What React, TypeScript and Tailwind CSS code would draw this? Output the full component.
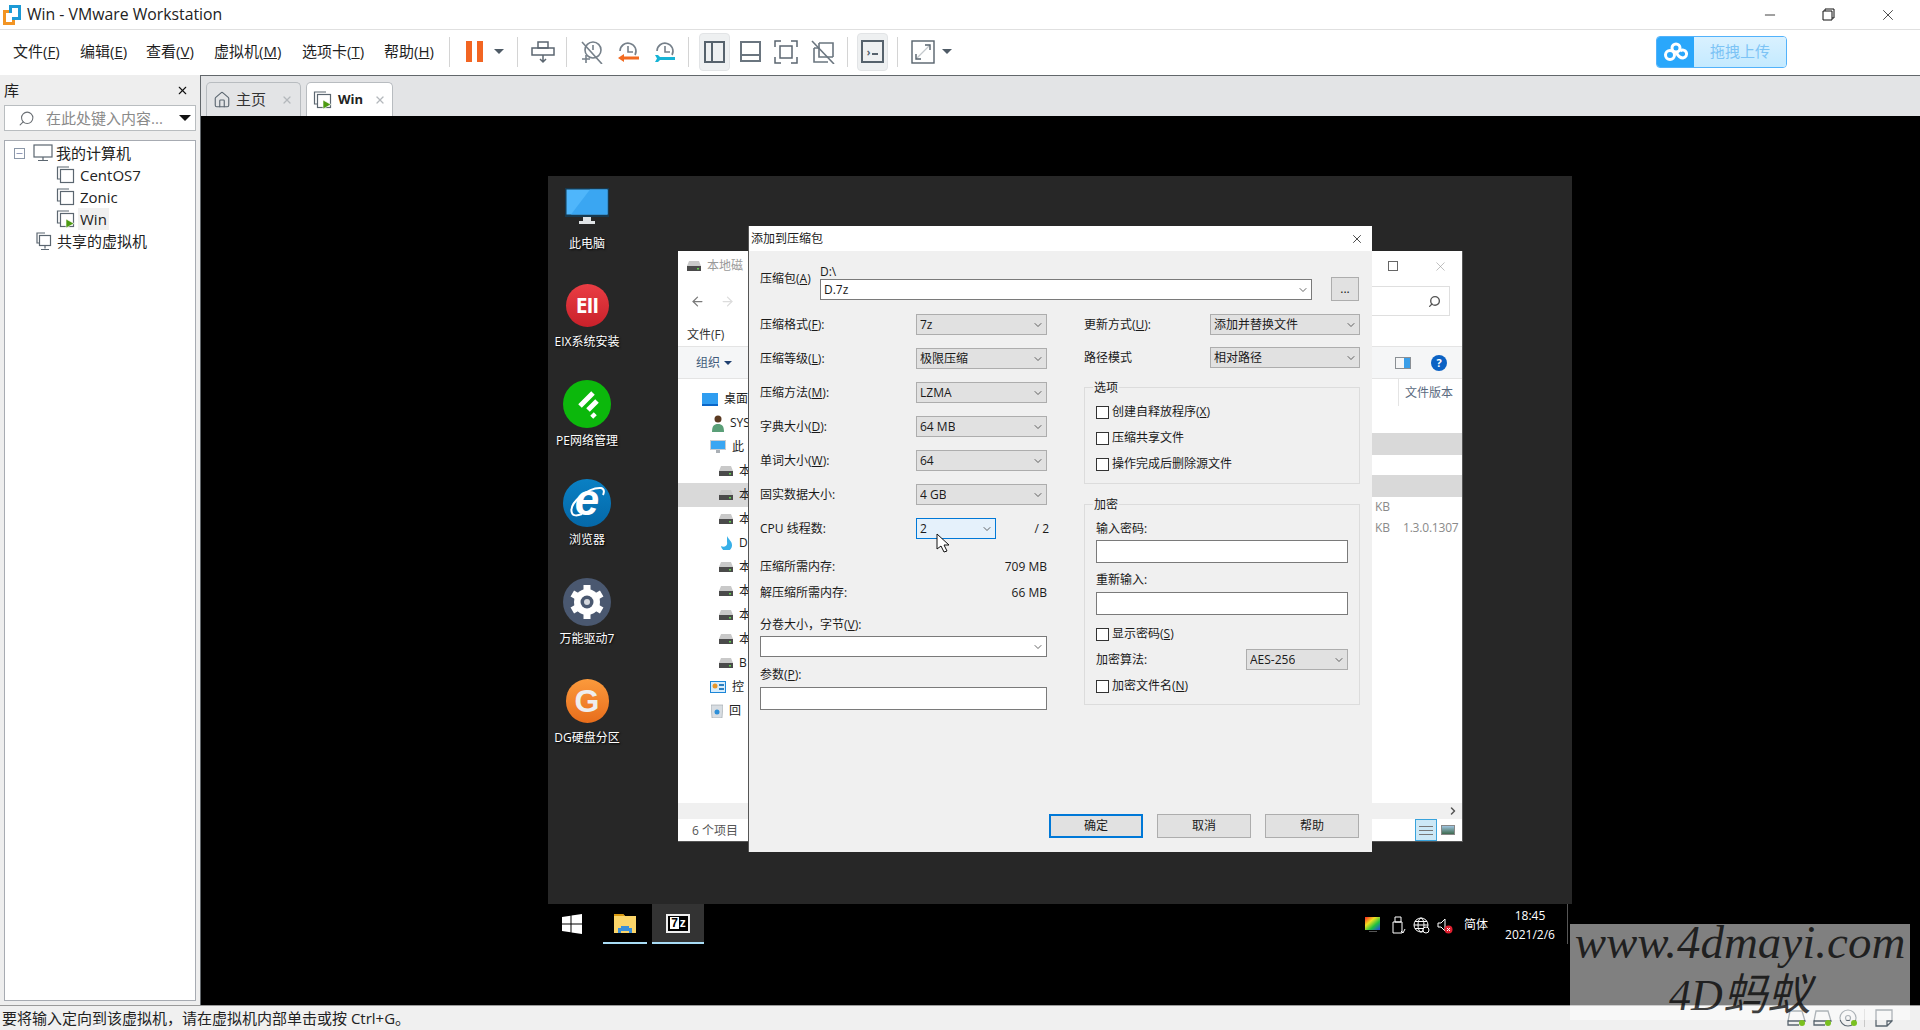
import React from 'react';
import { X, Minus, ChevronDown, ChevronRight, ArrowLeft, ArrowRight, Search, Home } from 'lucide-react';

const FONT = "font-['Open_Sans','Noto_Sans_CJK_SC',sans-serif]";

const menus = [
  { label: '文件', key: 'F', w: 'w-[67px]' },
  { label: '编辑', key: 'E', w: 'w-[66px]' },
  { label: '查看', key: 'V', w: 'w-[68px]' },
  { label: '虚拟机', key: 'M', w: 'w-[88px]' },
  { label: '选项卡', key: 'T', w: 'w-[82px]' },
  { label: '帮助', key: 'H', w: 'w-[65px]' },
];

function VmIcon({ run = false }: { run?: boolean }) {
  return (
    <svg width="20" height="20" viewBox="0 0 20 20" fill="none" stroke="#5b6670" strokeWidth="1.2" className="shrink-0">
      <path d="M13 2H1.5v12H4" />
      <rect x="4.5" y="4.5" width="13" height="13" />
      {run && <path d="M10 10l8 4.5-8 4.5z" fill="#4d9a12" stroke="#fff" strokeWidth="0.6" />}
    </svg>
  );
}

function Caret() {
  return <div className="w-0 h-0 border-x-[5px] border-x-transparent border-t-[5px] border-t-[#4f5b66]" />;
}

function Sep() {
  return <div className="w-px h-[30px] bg-[#d4d4d4]" />;
}

function SnapshotIcon({ color, wrench = false }: { color: string; wrench?: boolean }) {
  return (
    <svg width="24" height="24" viewBox="0 0 24 24" fill="none" className="shrink-0">
      <path d="M4 11a8 8 0 1 1 15 4" stroke="#76808a" strokeWidth="1.6" />
      <path d="M12 6v6h5" stroke="#76808a" strokeWidth="1.6" />
      {wrench ? (
        <path d="M2 15h3l2 2h15v3H7l-2 2H2l2-3.500z" fill={color} />
      ) : (
        <path d="M2 18l6-4v2.500h15v3H8V22z" fill={color} />
      )}
    </svg>
  );
}

function Toolbar() {
  return (
    <div className="flex items-center h-[45px] pb-[2px] bg-white shrink-0">
      <div className="flex items-center pl-[13px] text-[15px] text-[#1f1f1f]">
        {menus.map((m) => (
          <span key={m.key} className={m.w}>
            {m.label}(<u>{m.key}</u>)
          </span>
        ))}
      </div>
      <Sep />
      <div className="flex gap-[5px] ml-[16px]">
        <div className="w-[6px] h-[21px] bg-[#f26522]" />
        <div className="w-[6px] h-[21px] bg-[#f26522]" />
      </div>
      <div className="ml-[11px]"><Caret /></div>
      <div className="ml-[13px]"><Sep /></div>
      <svg width="24" height="24" viewBox="0 0 24 24" fill="none" stroke="#5b6670" strokeWidth="1.5" className="ml-[13px]">
        <rect x="7" y="2" width="10" height="6" />
        <rect x="1" y="8" width="22" height="7" />
        <path d="M12 15v6M9 19l3 3 3-3" />
      </svg>
      <div className="ml-[11px]"><Sep /></div>
      <div className="relative ml-[13px] w-6 h-6">
        <svg width="24" height="24" viewBox="0 0 24 24" fill="none" stroke="#76808a" strokeWidth="1.6">
          <circle cx="13" cy="10" r="8" />
          <path d="M13 5v5M2 2l20 22M2 19h8M6 15v8" />
        </svg>
      </div>
      <div className="ml-[12px]"><SnapshotIcon color="#f26a21" /></div>
      <div className="ml-[13px]"><SnapshotIcon color="#17b4d6" wrench /></div>
      <div className="ml-[11px]"><Sep /></div>
      <div className="ml-[10px] w-[31px] h-[38px] bg-[#eef0f1] border border-[#e2e4e6] rounded-[4px] flex items-center justify-center">
        <div className="w-[21px] h-[22px] border-2 border-[#56626c] flex">
          <div className="w-[7px] border-r-2 border-[#56626c]" />
        </div>
      </div>
      <div className="ml-[10px] w-[21px] h-[21px] border-2 border-[#6a757f] flex flex-col justify-end">
        <div className="h-[6px] border-t-2 border-[#6a757f]" />
      </div>
      <svg width="24" height="24" viewBox="0 0 24 24" fill="none" stroke="#5b6670" strokeWidth="1.5" className="ml-[13px]">
        <path d="M1 7V1h6M17 1h6v6M23 17v6h-6M7 23H1v-6" />
        <rect x="6" y="6" width="12" height="12" />
      </svg>
      <svg width="24" height="24" viewBox="0 0 24 24" fill="none" stroke="#6a757f" strokeWidth="1.6" className="ml-[13px]">
        <path d="M3 8v14h14M8 3h14v14M8 3v14h14M3 8h5" />
        <path d="M1 1l22 23" />
      </svg>
      <div className="ml-[12px]"><Sep /></div>
      <div className="ml-[9px] w-[31px] h-[38px] bg-[#eef0f1] border border-[#e2e4e6] rounded-[4px] flex items-center justify-center">
        <div className="w-[23px] h-[23px] border-2 border-[#56626c] flex items-center justify-center gap-[2px]">
          <span className="text-[10px] font-bold leading-none text-[#56626c]">›</span>
          <div className="w-[6px] h-[2px] mt-[4px] bg-[#56626c]" />
        </div>
      </div>
      <div className="ml-[9px]"><Sep /></div>
      <svg width="24" height="24" viewBox="0 0 24 24" fill="none" className="ml-[13px]">
        <rect x="1" y="1" width="22" height="22" stroke="#56626c" strokeWidth="1.4" />
        <path d="M6 18L18 6" stroke="#c3c8cc" strokeWidth="1.2" />
        <path d="M14 5h5v5M5 14v5h5" stroke="#56626c" strokeWidth="1.4" />
      </svg>
      <div className="ml-[7px]"><Caret /></div>
      <div className="ml-auto mr-[133px] flex w-[131px] h-[32px] rounded-[4px] border border-[#52b2fb] overflow-hidden">
        <div className="w-[37px] bg-[#2aa7fb] flex items-center justify-center">
          <svg width="26" height="20" viewBox="0 0 26 20" fill="none" stroke="#fff" strokeWidth="3">
            <circle cx="13" cy="6" r="4" />
            <circle cx="7" cy="13" r="4.500" />
            <path d="M13 10c2 4 4 6 7 6a4 4 0 1 0-3-7" />
          </svg>
        </div>
        <div className="flex-1 bg-gradient-to-b from-[#d9f1ff] to-[#c4eaff] flex items-center justify-center text-[15px] text-[#7cc3f5]">
          拖拽上传
        </div>
      </div>
    </div>
  );
}

function Library() {
  return (
    <div className="w-[196px] shrink-0 flex flex-col pl-1 pb-1">
      <div className="h-[30px] flex items-center justify-between text-[15px] text-[#222]">
        <span>库</span>
        <X size={13} strokeWidth={2} color="#111" className="mr-[7px]" />
      </div>
      <div className="h-[26px] bg-white border border-[#b9bdc0] flex items-center pl-[13px] pr-[4px]">
        <Search size={17} color="#6a6f74" strokeWidth={1.5} className="-scale-x-100" />
        <span className="ml-[11px] text-[15px] text-[#8a8a8a] whitespace-nowrap">在此处键入内容...</span>
        <div className="ml-auto w-0 h-0 border-x-[6px] border-x-transparent border-t-[6px] border-t-[#111]" />
      </div>
      <div className="mt-[9px] flex-1 bg-white border border-[#a7abb2] pt-[1px] text-[15px] text-[#222]">
        <div className="h-[22px] flex items-center pl-[9px]">
          <div className="w-[11px] h-[11px] border border-[#8b97a8] flex items-center justify-center">
            <Minus size={9} color="#394a80" strokeWidth={1.5} />
          </div>
          <svg width="20" height="18" viewBox="0 0 20 18" fill="none" stroke="#5b6670" strokeWidth="1.2" className="ml-[8px]">
            <rect x="1" y="1" width="18" height="12" />
            <path d="M10 13v3M5 16.500h10" />
          </svg>
          <span className="ml-[3px]">我的计算机</span>
        </div>
        {['CentOS7', 'Zonic', 'Win'].map((n) => (
          <div key={n} className="h-[22px] flex items-center pl-[51px]">
            <VmIcon run={n === 'Win'} />
            <span className={n === 'Win' ? 'ml-[2px] px-[2px] bg-[#f0f0f0] leading-[22px]' : 'ml-[4px]'}>{n}</span>
          </div>
        ))}
        <div className="h-[22px] flex items-center pl-[31px]">
          <svg width="16" height="19" viewBox="0 0 16 19" fill="none" stroke="#5b6670" strokeWidth="1.2">
            <path d="M9 1H1v10h2" />
            <rect x="3.500" y="3.500" width="11" height="10" />
            <path d="M9 13.500v3M5 17.500h8" />
          </svg>
          <span className="ml-[5px]">共享的虚拟机</span>
        </div>
      </div>
    </div>
  );
}

function Tabs() {
  return (
    <div className="h-[41px] bg-[#e3e4e6] border-t border-l border-[#62676b] flex items-end pl-[5px] gap-[5px] shrink-0">
      <div className="w-[95px] h-[34px] border border-b-0 border-[#b8bcc0] rounded-t-[5px] flex items-center pl-[6px] text-[15px] text-[#333]">
        <Home size={18} color="#5b6670" strokeWidth={1.5} />
        <span className="ml-[5px]">主页</span>
        <X size={12} color="#b4b8bc" strokeWidth={2.5} className="ml-[15px]" />
      </div>
      <div className="w-[87px] h-[34px] bg-white border border-b-0 border-[#b8bcc0] rounded-t-[5px] flex items-center pl-[6px] text-[13px] font-bold text-[#222]">
        <VmIcon run />
        <span className="ml-[5px]">Win</span>
        <X size={12} color="#b4b8bc" strokeWidth={2.5} className="ml-[11px]" />
      </div>
    </div>
  );
}

function DesktopItem({ label, children, h }: { label: string; children: React.ReactNode; h: string }) {
  return (
    <div className={`${h} flex flex-col items-center`}>
      <div className="h-[48px] flex items-center justify-center">{children}</div>
      <span className="mt-[3px] text-[12px] leading-[20px] text-white [text-shadow:1px_1px_2px_#000] whitespace-nowrap">{label}</span>
    </div>
  );
}

function DesktopIcons() {
  return (
    <div className="absolute left-0 top-[7px] w-[78px] flex flex-col">
      <DesktopItem label="此电脑" h="h-[98px]">
        <svg width="44" height="38" viewBox="0 0 44 38">
          <rect width="44" height="29" fill="#17394f" />
          <rect x="1.500" y="1.500" width="41" height="25" fill="#4fb6fb" />
          <path d="M25 1.500h17.500v25H6z" fill="#3aa6f2" />
          <path d="M18 29h8v4h4v3H14v-3h4z" fill="#dfe3e6" />
        </svg>
      </DesktopItem>
      <DesktopItem label="EIX系统安装" h="h-[99px]">
        <div className="w-[43px] h-[43px] rounded-full bg-gradient-to-b from-[#ea3d44] to-[#c9202a] flex items-center justify-center text-white text-[21px] font-bold leading-none tracking-[-1px]">
          EII
        </div>
      </DesktopItem>
      <DesktopItem label="PE网络管理" h="h-[99px]">
        <svg width="48" height="48" viewBox="0 0 48 48">
          <circle cx="24" cy="24" r="24" fill="#0cb80c" />
          <path d="M17 26l13-13M25 30l9-9M29 34l3 3" stroke="#fff" strokeWidth="5" fill="none" />
        </svg>
      </DesktopItem>
      <DesktopItem label="浏览器" h="h-[99px]">
        <div className="relative w-[48px] h-[48px] rounded-full bg-gradient-to-b from-[#0a80c4] to-[#0568a8] flex items-center justify-center">
          <span className="text-white text-[44px] font-bold italic leading-none font-['Liberation_Sans',sans-serif] -mt-[7px]">e</span>
          <svg width="48" height="48" viewBox="0 0 48 48" fill="none" className="absolute inset-0">
            <path d="M9 34C5 24 26 8 38 9c4 1 3 5 2 7M9 34c1 3 5 3 10 1" stroke="#fff" strokeWidth="2" />
          </svg>
        </div>
      </DesktopItem>
      <DesktopItem label="万能驱动7" h="h-[99px]">
        <svg width="48" height="48" viewBox="0 0 48 48">
          <circle cx="24" cy="24" r="24" fill="#4a5870" />
          <path d="M24 7V41M9.300 15.500L38.700 32.500M9.300 32.500L38.700 15.500" stroke="#fff" strokeWidth="7" />
          <circle cx="24" cy="24" r="13" fill="#fff" />
          <circle cx="24" cy="24" r="6.500" fill="#4a5870" />
          <circle cx="24" cy="24" r="3" fill="#d5d8de" />
        </svg>
      </DesktopItem>
      <DesktopItem label="DG硬盘分区" h="h-[99px]">
        <div className="w-[43px] h-[44px] rounded-full bg-gradient-to-b from-[#fb9a3c] to-[#e86d1a] flex items-center justify-center text-[#eeeeee] text-[32px] font-bold leading-none font-['Liberation_Sans',sans-serif]">
          G
        </div>
      </DesktopItem>
    </div>
  );
}

function Drive() {
  return (
    <svg width="14" height="10" viewBox="0 0 14 10" className="shrink-0">
      <path d="M2 0h10l2 5H0z" fill="#c9c9c9" />
      <rect y="5" width="14" height="5" fill="#4a4a4a" />
      <rect x="10" y="7" width="2" height="1.500" fill="#5fd04c" />
    </svg>
  );
}

// only the part of each name that shows beside the dialog
const treeRows: { text: string; kind: string; pl: string; active?: boolean }[] = [
  { text: '桌面', kind: 'desk', pl: 'pl-[24px]' },
  { text: 'SYS', kind: 'user', pl: 'pl-[34px]' },
  { text: '此', kind: 'pc', pl: 'pl-[32px]' },
  { text: '本', kind: 'drive', pl: 'pl-[41px]' },
  { text: '本', kind: 'drive', pl: 'pl-[41px]', active: true },
  { text: '本', kind: 'drive', pl: 'pl-[41px]' },
  { text: 'D', kind: 'dvd', pl: 'pl-[41px]' },
  { text: '本', kind: 'drive', pl: 'pl-[41px]' },
  { text: '本', kind: 'drive', pl: 'pl-[41px]' },
  { text: '本', kind: 'drive', pl: 'pl-[41px]' },
  { text: '本', kind: 'drive', pl: 'pl-[41px]' },
  { text: 'B', kind: 'drive', pl: 'pl-[41px]' },
  { text: '控', kind: 'panel', pl: 'pl-[32px]' },
  { text: '回', kind: 'bin', pl: 'pl-[33px]' },
];

function TreeGlyph({ kind }: { kind: string }) {
  if (kind === 'drive') return <Drive />;
  if (kind === 'desk') return <div className="w-4 h-[13px] bg-[#2f9df0] border-b-2 border-[#0a66c8] shrink-0" />;
  if (kind === 'user')
    return (
      <svg width="12" height="17" viewBox="0 0 12 17" className="shrink-0">
        <circle cx="6" cy="4" r="3.500" fill="#5b3a22" />
        <path d="M0 17c0-6 2-8 6-8s6 2 6 8z" fill="#5a9f78" />
      </svg>
    );
  if (kind === 'pc')
    return (
      <svg width="16" height="14" viewBox="0 0 16 14" className="shrink-0">
        <rect width="16" height="10" fill="#c8ccd0" />
        <rect x="1" y="1" width="14" height="8" fill="#3aa6f2" />
        <rect x="6" y="10" width="4" height="3" fill="#aab0b6" />
      </svg>
    );
  if (kind === 'dvd')
    return (
      <svg width="14" height="14" viewBox="0 0 14 14" className="shrink-0">
        <path d="M8 0c1 3 5 5 5 9a5.500 5.500 0 0 1-11 1c3 2 7 0 6-4z" fill="#38b0e8" />
      </svg>
    );
  if (kind === 'panel')
    return (
      <svg width="16" height="12" viewBox="0 0 16 12" className="shrink-0">
        <rect width="16" height="12" fill="#1c86d8" />
        <rect x="1" y="1" width="14" height="10" fill="#d7ecfb" />
        <circle cx="5" cy="5" r="2.500" fill="#e8962a" />
        <rect x="9" y="3" width="5" height="2" fill="#2d7fc0" />
        <rect x="9" y="7" width="5" height="2" fill="#2d7fc0" />
      </svg>
    );
  return (
    <svg width="12" height="14" viewBox="0 0 12 14" className="shrink-0">
      <path d="M0 1h12l-1 13H1z" fill="#d8dde2" stroke="#9aa2a8" strokeWidth="0.6" />
      <circle cx="6" cy="8" r="2.500" fill="#2d8fd8" />
    </svg>
  );
}

function Explorer() {
  return (
    <div className="absolute left-[130px] top-[75px] w-[785px] h-[591px] bg-white border-r border-b border-[#555] flex flex-col text-[12px] text-[#333]">
      <div className="h-[30px] flex items-center shrink-0 pl-[9px]">
        <Drive />
        <span className="ml-[6px] text-[#9a9a9a]">本地磁</span>
        <div className="ml-auto w-[10px] h-[10px] border border-[#666]" />
        <X size={15} color="#9a9a9a" strokeWidth={1} className="ml-[35px] mr-[14px]" />
      </div>
      <div className="h-[40px] flex items-center shrink-0 pl-[12px]">
        <ArrowLeft size={15} color="#7a7a7a" strokeWidth={2} />
        <ArrowRight size={15} color="#dcdcdc" strokeWidth={2} className="ml-[15px]" />
        <div className="ml-auto mr-[12px] w-[200px] h-[30px] border border-[#dfdfdf] flex items-center justify-end pr-[8px]">
          <Search size={13} color="#555" strokeWidth={2.5} className="-scale-x-100" />
        </div>
      </div>
      <div className="h-[25px] flex items-center shrink-0 pl-[9px] pt-[3px] text-[#333]">
        <span>文件(F)</span>
      </div>
      <div className="h-[33px] bg-[#f5f6f7] border-y border-[#e4e4e4] flex items-center shrink-0 pl-[18px] text-[#3f5a7a]">
        <span>组织</span>
        <div className="ml-[4px] w-0 h-0 border-x-[4px] border-x-transparent border-t-[4px] border-t-[#1f3f6f]" />
        <div className="ml-auto w-[16px] h-[12px] border border-[#8a8f94] flex justify-end">
          <div className="w-[6px] bg-[#3a9ee8]" />
        </div>
        <div className="ml-[20px] mr-[15px] w-[16px] h-[16px] rounded-full bg-[#0b62c4] flex items-center justify-center text-white text-[11px] font-bold leading-none">?</div>
      </div>
      <div className="flex-1 flex min-h-0">
        <div className="w-[70px] pt-2 overflow-hidden shrink-0">
          {treeRows.map((r, i) => (
            <div key={i} className={`h-6 flex items-center whitespace-nowrap ${r.pl} ${r.active ? 'bg-[#d9d9d9]' : ''}`}>
              <TreeGlyph kind={r.kind} />
              <span className="ml-[6px] text-[#222]">{r.text}</span>
            </div>
          ))}
        </div>
        <div className="flex-1 flex flex-col">
          <div className="h-[27px] pl-[650px] shrink-0">
            <div className="h-full border-l border-[#e4e4e4] pl-[6px] leading-[27px] text-[#5a6a80]">文件版本</div>
          </div>
          <div className="mt-[6px] h-[21px]" />
          <div className="h-[22px] bg-[#d9d9d9]" />
          <div className="h-[20px]" />
          <div className="h-[22px] bg-[#d9d9d9]" />
          <div className="h-[21px] pl-[627px] leading-[20px] text-[#8a8a8a]">KB</div>
          <div className="h-[21px] pl-[627px] flex leading-[20px] text-[#8a8a8a] whitespace-nowrap">
            <span className="w-[28px] shrink-0">KB</span>
            <span className="tracking-[-0.2px]">1.3.0.1307</span>
          </div>
        </div>
      </div>
      <div className="h-[16px] bg-[#f0f0f0] shrink-0 flex items-center justify-end pr-[3px]">
        <ChevronRight size={12} color="#555" strokeWidth={3} />
      </div>
      <div className="h-[22px] shrink-0 flex items-center pl-[14px] text-[#555]">
        <span className="pt-[2px]">6 个项目</span>
        <div className="ml-auto w-[22px] h-[22px] bg-[#cce8f6] border border-[#39a3dc] flex flex-col justify-center gap-[3px] px-[3px]">
          <div className="h-px bg-[#777]" />
          <div className="h-px bg-[#777]" />
          <div className="h-px bg-[#777]" />
        </div>
        <div className="ml-[4px] mr-[7px] w-[14px] h-[10px] border border-[#888] bg-gradient-to-b from-[#9fc4e0] to-[#3f6a4f]" />
      </div>
    </div>
  );
}

function Label({ text, k, suffix = ':' }: { text: string; k?: string; suffix?: string }) {
  return (
    <span className="whitespace-nowrap">
      {text}
      {k && (
        <>
          (<u>{k}</u>)
        </>
      )}
      {suffix}
    </span>
  );
}

function Select({ value, w, focus = false, white = false }: { value: string; w: string; focus?: boolean; white?: boolean }) {
  const tone = focus
    ? 'bg-[#e5f1fb] border-[#0078d7]'
    : white
      ? 'bg-white border-[#7a7a7a]'
      : 'bg-[#e1e1e1] border-[#adadad]';
  return (
    <div className={`${w} h-[21px] shrink-0 border ${tone} flex items-center justify-between pl-[3px] pr-[2px]`}>
      <span className="truncate">{value}</span>
      <ChevronDown size={12} color="#333" strokeWidth={1.5} />
    </div>
  );
}

const formRows = [
  { text: '压缩格式', k: 'F', value: '7z' },
  { text: '压缩等级', k: 'L', value: '极限压缩' },
  { text: '压缩方法', k: 'M', value: 'LZMA' },
  { text: '字典大小', k: 'D', value: '64 MB' },
  { text: '单词大小', k: 'W', value: '64' },
  { text: '固实数据大小', value: '4 GB' },
];

function Check({ label, k }: { label: string; k?: string }) {
  return (
    <div className="flex items-center h-[14px]">
      <div className="w-[13px] h-[13px] bg-white border border-[#333]" />
      <span className="ml-[3px]">
        <Label text={label} k={k} suffix="" />
      </span>
    </div>
  );
}

function Group({ title, className, children }: { title: string; className: string; children: React.ReactNode }) {
  return (
    <div className={`relative border border-[#dcdcdc] px-[11px] ${className}`}>
      <span className="absolute -top-[8px] left-[8px] px-[1px] bg-[#f0f0f0] leading-[16px]">{title}</span>
      {children}
    </div>
  );
}

function Btn({ label, primary = false }: { label: string; primary?: boolean }) {
  return (
    <div className={`w-[94px] h-[24px] bg-[#e1e1e1] flex items-center justify-center ${primary ? 'border-2 border-[#0078d7]' : 'border border-[#adadad]'}`}>
      {label}
    </div>
  );
}

function Dialog() {
  return (
    <div className="absolute left-[200px] top-[50px] w-[624px] h-[626px] bg-[#f0f0f0] border-l border-[#555] flex flex-col text-[12px] text-[#1a1a1a]">
      <div className="h-[25px] bg-white flex items-center justify-between shrink-0 pl-[2px] pr-[8px]">
        <span>添加到压缩包</span>
        <X size={14} color="#111" strokeWidth={1.3} />
      </div>
      <div className="h-[51px] shrink-0 flex pl-[11px] pt-[17px]">
        <div className="w-[60px] pt-[1px] leading-[20px]"><Label text="压缩包" k="A" suffix="" /></div>
        <div className="-mt-[4px]">
          <div className="h-[15px] leading-[15px]">D:\</div>
          <div className="w-[492px] h-[21px] bg-white border border-[#7a7a7a] flex items-center justify-between pl-[3px] pr-[2px]">
            <span>D.7z</span>
            <ChevronDown size={12} color="#333" strokeWidth={1.5} />
          </div>
        </div>
        <div className="ml-[19px] mt-[9px] w-[28px] h-[24px] bg-[#e1e1e1] border border-[#adadad] flex items-center justify-center">...</div>
      </div>
      <div className="h-[12px] shrink-0" />
      <div className="flex-1 flex pl-[11px] min-h-0">
        <div className="w-[287px] flex flex-col shrink-0">
          {formRows.map((r) => (
            <div key={r.text} className="h-[34px] shrink-0 flex justify-between">
              <div className="h-[21px] flex items-center"><Label text={r.text} k={r.k} /></div>
              <Select value={r.value} w="w-[131px]" />
            </div>
          ))}
          <div className="h-[34px] shrink-0 flex">
            <div className="w-[156px] h-[21px] flex items-center">CPU 线程数:</div>
            <Select value="2" w="w-[80px]" focus />
            <div className="ml-auto -mr-[2px] h-[21px] flex items-center">/ 2</div>
          </div>
          <div className="mt-[2px] h-[26px] flex items-center justify-between">
            <Label text="压缩所需内存" /><span>709 MB</span>
          </div>
          <div className="h-[26px] flex items-center justify-between">
            <Label text="解压缩所需内存" /><span>66 MB</span>
          </div>
          <div className="mt-[8px] h-[22px] flex items-center"><Label text="分卷大小，字节" k="V" /></div>
          <Select value="" w="w-full" white />
          <div className="mt-[6px] h-[23px] flex items-center"><Label text="参数" k="P" /></div>
          <div className="h-[23px] mt-[1px] bg-white border border-[#7a7a7a]" />
        </div>
        <div className="ml-[37px] w-[276px] flex flex-col">
          <div className="h-[33px] flex justify-between shrink-0">
            <div className="h-[21px] flex items-center"><Label text="更新方式" k="U" /></div>
            <Select value="添加并替换文件" w="w-[150px]" />
          </div>
          <div className="h-[40px] flex justify-between shrink-0">
            <div className="h-[21px] flex items-center">路径模式</div>
            <Select value="相对路径" w="w-[150px]" />
          </div>
          <Group title="选项" className="h-[97px] pt-[17px] flex flex-col gap-[12px]">
            <Check label="创建自释放程序" k="X" />
            <Check label="压缩共享文件" />
            <Check label="操作完成后删除源文件" />
          </Group>
          <Group title="加密" className="mt-[20px] h-[201px] pt-[13px] flex flex-col">
            <div className="h-[22px] flex items-center"><Label text="输入密码" /></div>
            <div className="w-[252px] h-[23px] bg-white border border-[#7a7a7a]" />
            <div className="h-[29px] pt-[4px] flex items-center"><Label text="重新输入" /></div>
            <div className="w-[252px] h-[23px] bg-white border border-[#7a7a7a]" />
            <div className="mt-[12px]"><Check label="显示密码" k="S" /></div>
            <div className="mt-[8px] flex justify-between w-[252px]">
              <div className="h-[21px] flex items-center"><Label text="加密算法" /></div>
              <Select value="AES-256" w="w-[102px]" />
            </div>
            <div className="mt-[9px]"><Check label="加密文件名" k="N" /></div>
          </Group>
        </div>
      </div>
      <div className="flex justify-end gap-[14px] pr-[13px] pb-[14px] shrink-0">
        <Btn label="确定" primary />
        <Btn label="取消" />
        <Btn label="帮助" />
      </div>
    </div>
  );
}

function Taskbar() {
  return (
    <div className="h-[41px] flex bg-black text-white relative">
      <svg width="20" height="20" viewBox="0 0 20 20" className="ml-[14px] mt-[10px]" fill="#fff">
        <path d="M0 3l8.500-1.200v7.700H0zM9.500 1.600L20 0v9.500H9.500zM0 10.500h8.500v7.700L0 17zM9.500 10.500H20V20L9.500 18.400z" />
      </svg>
      <div className="ml-[21px] w-[44px] h-[40px] border-b-2 border-[#a8dcf5] flex items-center justify-center">
        <svg width="22" height="19" viewBox="0 0 22 19">
          <path d="M0 0h9l2 2h11v17H0z" fill="#fbd569" />
          <path d="M0 0h9l2 2H0z" fill="#d99a10" />
          <path d="M4 14h14v5h-3v-2H7v2H4z" fill="#3a8fd8" />
          <path d="M7 12h8v2H7z" fill="#3a8fd8" />
        </svg>
      </div>
      <div className="ml-[5px] w-[52px] h-[40px] bg-[#333] border-b-2 border-[#a8dcf5] flex items-center justify-center">
        <div className="w-[24px] h-[19px] bg-black border-2 border-[#eee] flex items-center justify-center gap-[1px] text-white font-bold text-[12px] leading-none font-['Liberation_Sans',sans-serif]">
          <span className="bg-white text-black px-[1px]">7</span>
          <span>z</span>
        </div>
      </div>
      <div className="ml-auto flex items-start">
        <svg width="16" height="16" viewBox="0 0 16 16" className="mt-[13px]">
          <defs>
            <linearGradient id="rainbow" x1="0" y1="0" x2="1" y2="1">
              <stop offset="0" stopColor="#ff2020" />
              <stop offset="0.35" stopColor="#f0e020" />
              <stop offset="0.65" stopColor="#20c040" />
              <stop offset="1" stopColor="#2040f0" />
            </linearGradient>
          </defs>
          <rect width="15" height="13" fill="url(#rainbow)" />
          <rect x="4" y="14" width="8" height="1" fill="#555" />
        </svg>
        <svg width="14" height="18" viewBox="0 0 14 18" fill="none" stroke="#fff" strokeWidth="1" className="ml-[11px] mt-[12px]">
          <path d="M3 1h6v5H3zM1 6h9v11H1z" />
          <path d="M9 15l2 2 2-4" />
        </svg>
        <svg width="17" height="17" viewBox="0 0 17 17" fill="none" stroke="#fff" strokeWidth="1" className="ml-[7px] mt-[13px]">
          <circle cx="8" cy="8" r="7" />
          <ellipse cx="8" cy="8" rx="3" ry="7" />
          <path d="M1 8h14M2 4.500h12M2 11.500h12" />
          <circle cx="13" cy="13" r="3" fill="#000" />
        </svg>
        <svg width="16" height="16" viewBox="0 0 16 16" className="ml-[7px] mt-[14px]">
          <path d="M1 5h3l4-4v12L4 9H1z" fill="none" stroke="#fff" />
          <circle cx="11.500" cy="11.500" r="4" fill="#e02030" />
          <path d="M10 10l3 3M13 10l-3 3" stroke="#fff" />
        </svg>
        <span className="ml-[11px] mt-[13px] text-[12px] leading-[16px]">简体</span>
        <div className="ml-[10px] w-[64px] pt-[2px] text-center text-[12px] leading-[19px]">
          <div>18:45</div>
          <div>2021/2/6</div>
        </div>
        <div className="ml-[5px] mr-[4px] mt-0 w-px h-[40px] bg-[#555]" />
      </div>
    </div>
  );
}

function StatusBar() {
  return (
    <div className="h-[25px] bg-[#f0f0f0] border-t border-[#9a9a9a] flex items-center pl-[2px] text-[15px] text-[#222] shrink-0">
      <span>要将输入定向到该虚拟机，请在虚拟机内部单击或按 Ctrl+G。</span>
      <div className="ml-auto mr-[27px] flex items-center gap-[7px]">
        {[0, 1].map((i) => (
          <svg key={i} width="19" height="17" viewBox="0 0 19 17" fill="none" stroke="#59656f" strokeWidth="1.3">
            <path d="M3 1h12l3 10H1zM1 11v4h11" />
            <circle cx="15" cy="13" r="3" fill="#7ac020" stroke="none" />
          </svg>
        ))}
        <svg width="19" height="18" viewBox="0 0 19 18" fill="none" stroke="#59656f" strokeWidth="1.2">
          <circle cx="9" cy="9" r="8" />
          <circle cx="9" cy="9" r="2.500" />
          <circle cx="15" cy="14" r="3" fill="#7ac020" stroke="none" />
        </svg>
        <div className="w-px h-[18px] bg-[#c8c8c8] -ml-[1px] mr-[3px]" />
        <svg width="18" height="18" viewBox="0 0 18 18" fill="none" stroke="#59656f" strokeWidth="1.3">
          <path d="M1 1h16v11l-5 5H1zM17 12h-5v5" />
        </svg>
      </div>
    </div>
  );
}

export default function App() {
  return (
    <div className={`relative w-[1920px] h-screen flex flex-col overflow-hidden bg-[#eeeeee] ${FONT}`}>
      <div className="h-[30px] bg-white flex items-center shrink-0 border-b border-[#e0e0e0]">
        <svg width="18" height="22" viewBox="0 0 18 22" className="ml-[3px]">
          <rect x="0" y="6" width="12" height="15" fill="#f29423" />
          <rect x="6" y="1" width="12" height="15" fill="#1c9ad6" />
          <rect x="3" y="9" width="6" height="9" fill="#fff" />
          <rect x="9" y="4" width="6" height="9" fill="#fff" />
        </svg>
        <span className="ml-[6px] text-[15.8px] text-[#222]">Win - VMware Workstation</span>
        <Minus size={16} color="#111" strokeWidth={1.2} className="ml-auto" />
        <svg width="13" height="13" viewBox="0 0 13 13" fill="none" stroke="#111" className="ml-[44px]">
          <path d="M3 3V1h9v9h-2M1 3h9v9H1z" />
        </svg>
        <X size={18} color="#111" strokeWidth={1} className="ml-[44px] mr-[23px]" />
      </div>
      <Toolbar />
      <div className="flex-1 flex min-h-0">
        <Library />
        <div className="ml-1 flex-1 flex flex-col min-w-0">
          <Tabs />
          <div className="flex-1 bg-black pl-[347px] pt-[60px] border-l border-[#62676b]">
            <div className="w-[1024px]">
              <div className="relative h-[728px] bg-[#272727]">
                <DesktopIcons />
                <Explorer />
                <Dialog />
                <svg width="14" height="20" viewBox="0 0 14 20" className="absolute left-[388px] top-[357px]">
                  <path d="M1 1v15l4-3 3 6 3-1-3-6h5z" fill="#fff" stroke="#111" strokeWidth="1" />
                </svg>
              </div>
              <Taskbar />
            </div>
          </div>
        </div>
      </div>
      <StatusBar />
      <div className="absolute left-[1570px] top-[924px] w-[340px] h-[96px] bg-white/50 flex flex-col items-center text-black/75 font-['Liberation_Serif','Noto_Sans_CJK_SC',serif] italic leading-none">
        <span className="text-[47px] -mt-[5px] whitespace-nowrap">www.4dmayi.com</span>
        <span className="text-[44px] mt-[8px] whitespace-nowrap">4D蚂蚁</span>
      </div>
    </div>
  );
}
